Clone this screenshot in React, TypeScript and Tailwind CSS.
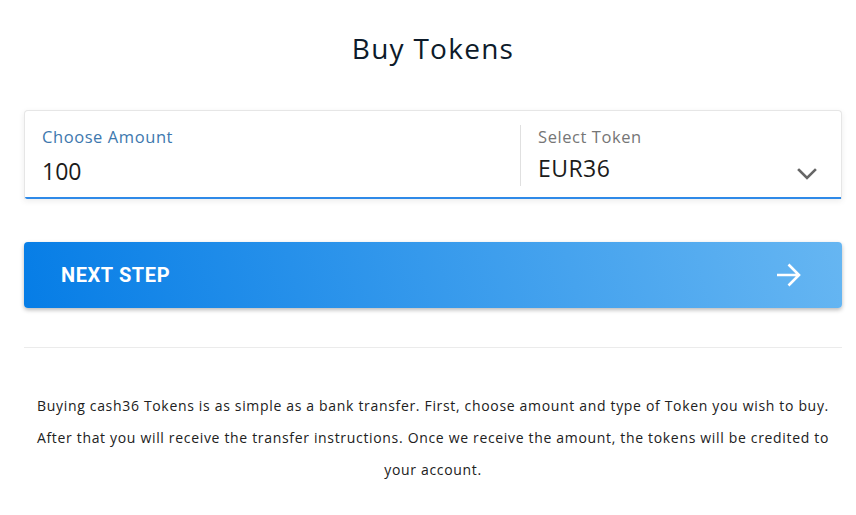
import React from "react";

export default function App() {
  return (
    <div className="min-h-[515px] bg-white pl-6 pr-[14px] pt-[28px] font-['Open_Sans',sans-serif]">
      <h1 className="text-center text-[28px] leading-[40px] tracking-[0.045em] text-[#0d1b2a] font-normal">Buy Tokens</h1>

      <div className="mt-[42px] flex h-[89px] rounded-t-[4px] border border-b-0 border-[#e6e6e6] bg-white shadow-[0_2px_6px_rgba(0,0,0,0.08)]">
        <div className="flex flex-1 flex-col border-b-2 border-[#2f8ae8] rounded-bl-[2px]">
          <div className="flex flex-1 pt-[14px]">
            <div className="w-[496px] pl-[17px] pr-4 border-r border-[#e0e0e0] mb-[16px]">
              <div className="text-[16.5px] leading-[24px] tracking-[0.035em] text-[#3d78ae]">Choose Amount</div>
              <div className="mt-[7px] text-[23px] leading-[30px] text-[#1b1b1b]">100</div>
            </div>
            <div className="flex-1 pl-[17px] pr-[24px] mb-[16px] flex items-start">
              <div className="flex-1">
                <div className="text-[16.5px] leading-[24px] tracking-[0.035em] text-[#767676]">Select Token</div>
                <div className="mt-[4px] text-[23px] leading-[30px] tracking-[0.02em] text-[#1b1b1b]">EUR36</div>
              </div>
              <svg width="20" height="12" viewBox="0 0 20 12" className="mt-[43px]">
                <path d="M2 2l8 8 8-8" fill="none" stroke="#666" strokeWidth="2.6" strokeLinecap="square" />
              </svg>
            </div>
          </div>
        </div>
      </div>

      <button className="mt-[43px] flex h-[66px] w-full items-center justify-between rounded-[4px] bg-linear-[75deg] from-[#067de6] to-[#66b6f2] pl-[37px] pr-[41px] shadow-[0_2px_4px_rgba(0,0,0,0.28)] font-['Roboto',sans-serif]">
        <span className="text-[20px] font-bold text-white tracking-[0.03em]">NEXT STEP</span>
        <svg width="25" height="24" viewBox="0 0 25 24">
          <path d="M1 12h21.5M12.5 1.5L23 12 12.5 22.5" fill="none" stroke="#fff" strokeWidth="2.6" />
        </svg>
      </button>

      <div className="mt-[39px] h-px bg-[#ebebeb]" />

      <p className="mt-[42px] text-center text-[14px] leading-[32px] tracking-[0.048em] text-[#212121]">
        Buying cash36 Tokens is as simple as a bank transfer. First, choose amount and type of Token you wish to buy.
        <br />
        After that you will receive the transfer instructions. Once we receive the amount, the tokens will be credited to
        <br />
        your account.
      </p>
    </div>
  );
}
